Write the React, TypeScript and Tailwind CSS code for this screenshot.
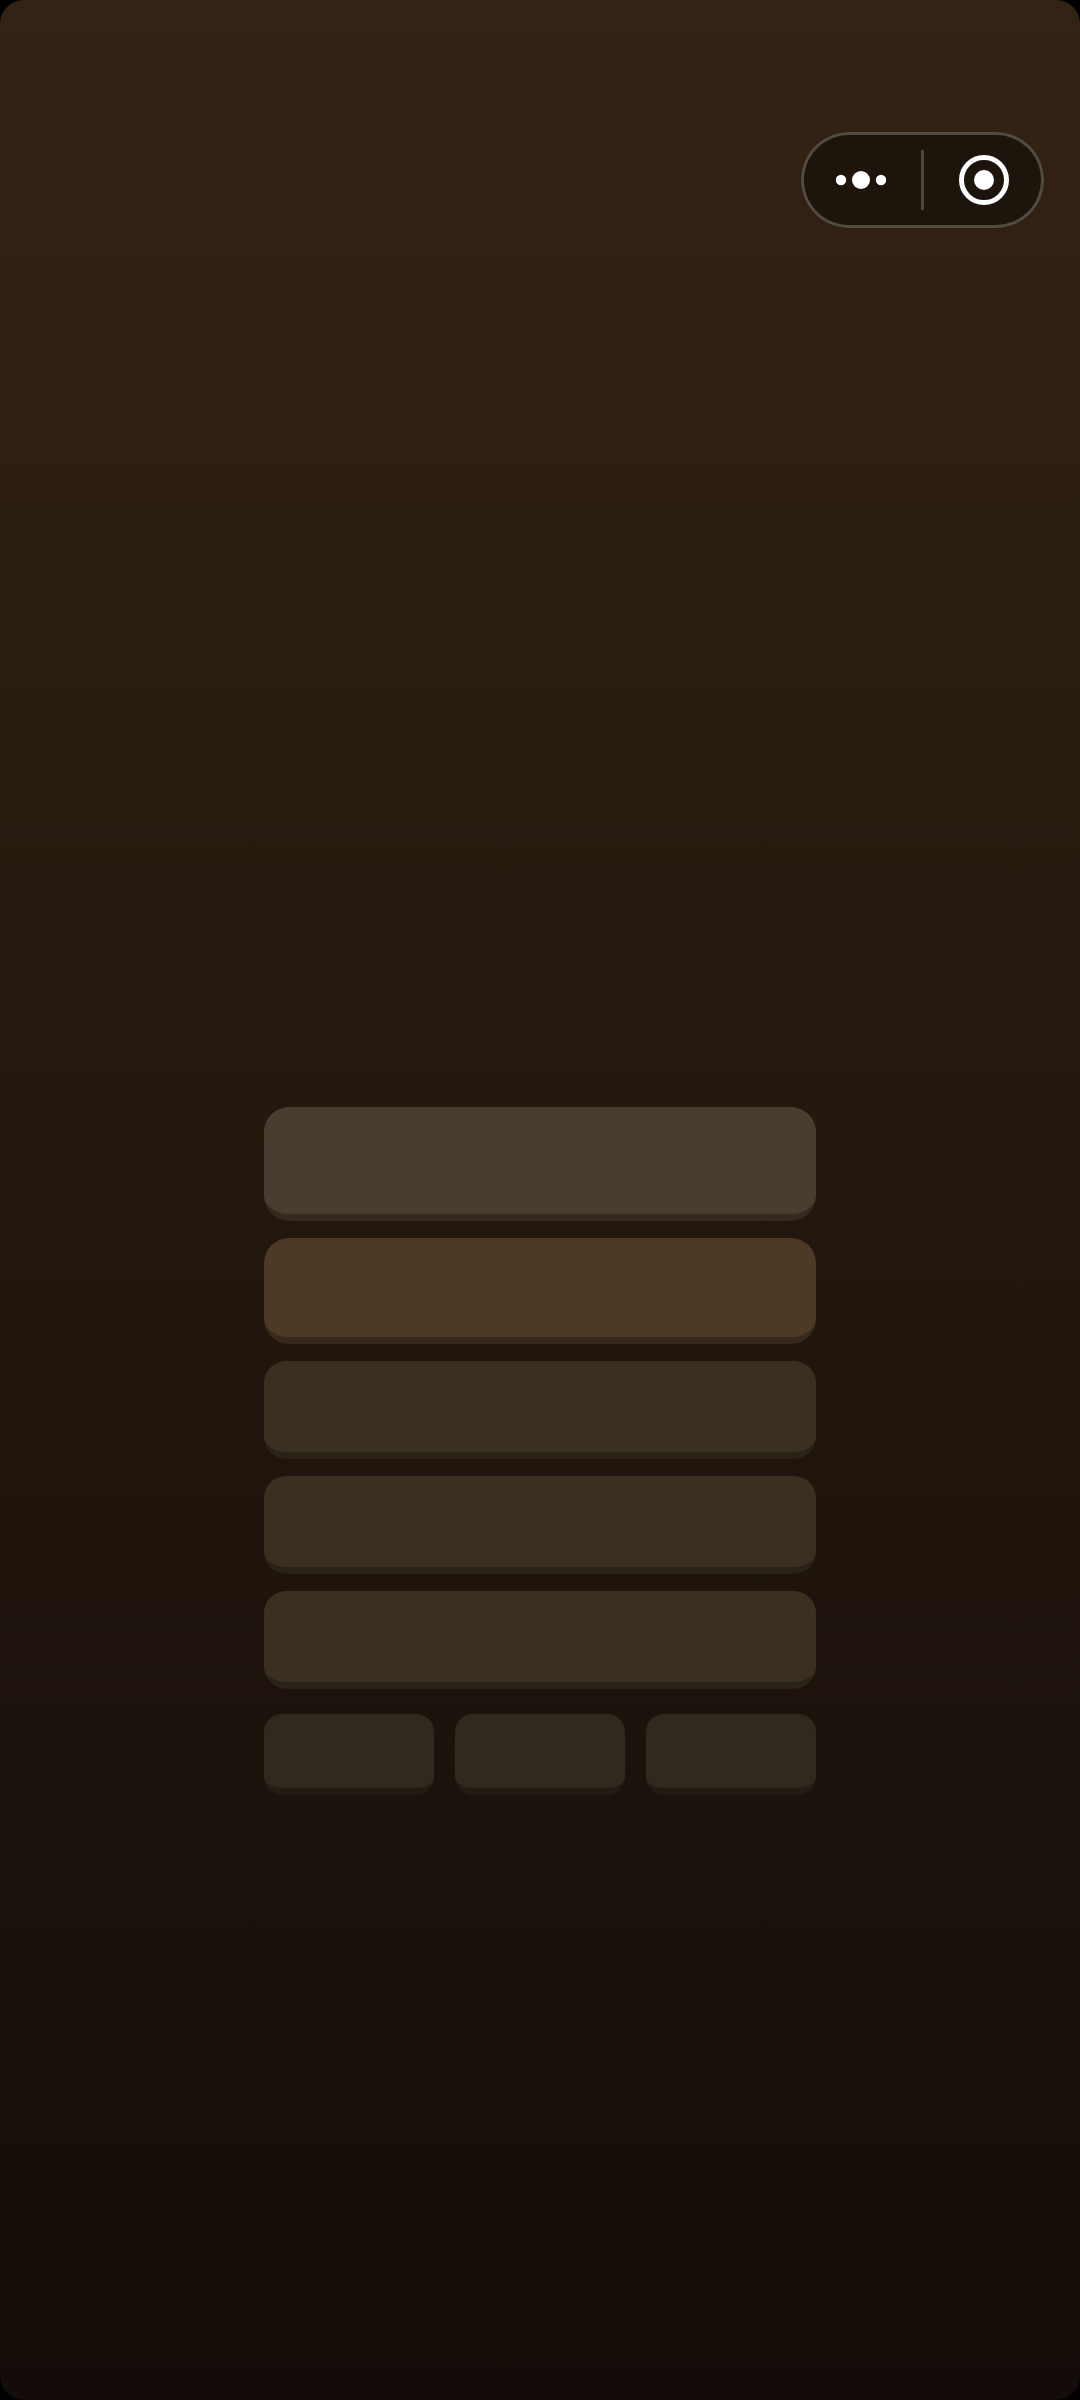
const MENU_ITEMS = [
  { name: "Primary", style: "h-[114px] rounded-[25px] bg-[#483e2f] border-[#33291f]" },
  { name: "Secondary", style: "h-[106px] rounded-[25px] bg-[#4c3926] border-[#38281c]" },
  { name: "Option one", style: "h-[98px] rounded-[22px] bg-[#393022] border-[#2a2117]" },
  { name: "Option two", style: "h-[98px] rounded-[22px] bg-[#393022] border-[#2a2117]" },
  { name: "Option three", style: "h-[98px] rounded-[22px] bg-[#393022] border-[#2a2117]" },
];

const SMALL_ITEMS = ["Left", "Middle", "Right"];

function Capsule() {
  return (
    <div className="flex h-24 w-[243px] items-center rounded-full bg-[#1d140c] ring-3 ring-inset ring-[#534a40]">
      <button className="flex h-full flex-1 items-center justify-center" aria-label="More">
        <svg width="50" height="18" viewBox="0 0 50 18" fill="white">
          <circle cx="5" cy="9" r="5.2" />
          <circle cx="25" cy="9" r="9" />
          <circle cx="45" cy="9" r="5.2" />
        </svg>
      </button>
      <span className="h-[60px] w-[3px] bg-[#4f463d]" />
      <button className="flex h-full flex-1 items-center justify-center" aria-label="Close">
        <svg width="50" height="50" viewBox="0 0 50 50" fill="none">
          <circle cx="25" cy="25" r="22.5" stroke="white" strokeWidth="5" />
          <circle cx="25" cy="25" r="10" fill="white" />
        </svg>
      </button>
    </div>
  );
}

export default function App() {
  return (
    <div className="bg-black">
      <div className="min-h-screen rounded-[24px] bg-linear-to-b from-[#332315] via-[#24190f] via-45% to-[#140c08]">
        <header className="flex justify-end px-9 pt-[132px]">
          <Capsule />
        </header>

        <main className="mx-auto flex w-full max-w-[552px] flex-col gap-[25px] pt-[879px]">
          <nav className="flex flex-col gap-[17px]" aria-label="Menu">
            {MENU_ITEMS.map((item) => (
              <button
                key={item.name}
                aria-label={item.name}
                className={`w-full border-b-7 ${item.style}`}
              />
            ))}
          </nav>

          <div className="grid grid-cols-3 gap-[21px]">
            {SMALL_ITEMS.map((name) => (
              <button
                key={name}
                aria-label={name}
                className="h-[81px] rounded-[18px] border-b-7 border-[#241b14] bg-[#31281e]"
              />
            ))}
          </div>
        </main>
      </div>
    </div>
  );
}
